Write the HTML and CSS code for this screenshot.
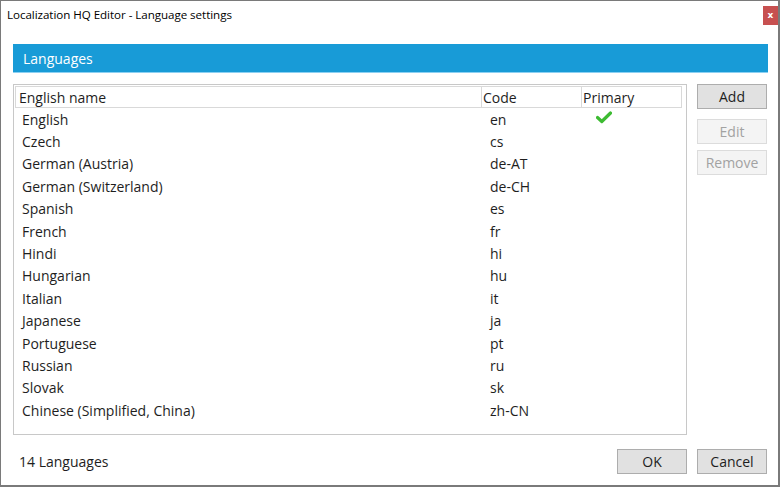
FILE: index.html
```html
<!DOCTYPE html>
<html>
<head>
<meta charset="utf-8">
<link rel="stylesheet" href="styles.css">
</head>
<body>
<div class="window">
  <div class="titlebar">
    <span class="title">Localization HQ Editor - Language settings</span>
    <span class="close">x</span>
  </div>
  <div class="content">
    <div class="section-header">Languages</div>
    <div class="main">
      <div class="listbox">
        <div class="list-head">
          <div class="col-name hcell">English name</div>
          <div class="col-code hcell">Code</div>
          <div class="col-primary hcell">Primary</div>
        </div>
        <div class="rows">
          <div class="row"><div class="col-name">English</div><div class="col-code">en</div><div class="col-primary"><svg class="check" width="16" height="13" viewBox="0 0 16 13"><path d="M1.5 6.5 L5.8 10.5 L14.5 2" fill="none" stroke="#3dbb32" stroke-width="3.2" stroke-linecap="round" stroke-linejoin="round"/></svg></div></div>
          <div class="row"><div class="col-name">Czech</div><div class="col-code">cs</div><div class="col-primary"></div></div>
          <div class="row"><div class="col-name">German (Austria)</div><div class="col-code">de-AT</div><div class="col-primary"></div></div>
          <div class="row"><div class="col-name">German (Switzerland)</div><div class="col-code">de-CH</div><div class="col-primary"></div></div>
          <div class="row"><div class="col-name">Spanish</div><div class="col-code">es</div><div class="col-primary"></div></div>
          <div class="row"><div class="col-name">French</div><div class="col-code">fr</div><div class="col-primary"></div></div>
          <div class="row"><div class="col-name">Hindi</div><div class="col-code">hi</div><div class="col-primary"></div></div>
          <div class="row"><div class="col-name">Hungarian</div><div class="col-code">hu</div><div class="col-primary"></div></div>
          <div class="row"><div class="col-name">Italian</div><div class="col-code">it</div><div class="col-primary"></div></div>
          <div class="row"><div class="col-name">Japanese</div><div class="col-code">ja</div><div class="col-primary"></div></div>
          <div class="row"><div class="col-name">Portuguese</div><div class="col-code">pt</div><div class="col-primary"></div></div>
          <div class="row"><div class="col-name">Russian</div><div class="col-code">ru</div><div class="col-primary"></div></div>
          <div class="row"><div class="col-name">Slovak</div><div class="col-code">sk</div><div class="col-primary"></div></div>
          <div class="row"><div class="col-name">Chinese (Simplified, China)</div><div class="col-code">zh-CN</div><div class="col-primary"></div></div>
        </div>
      </div>
      <div class="side-buttons">
        <div class="btn">Add</div>
        <div class="btn disabled gap-top">Edit</div>
        <div class="btn disabled">Remove</div>
      </div>
    </div>
    <div class="footer">
      <span class="count">14 Languages</span>
      <div class="footer-buttons">
        <div class="btn">OK</div>
        <div class="btn">Cancel</div>
      </div>
    </div>
  </div>
</div>
</body>
</html>
```

FILE: styles.css
```css
* { box-sizing: border-box; }
html, body { margin: 0; padding: 0; background: #fff; }
body {
  font-family: "Open Sans", "Noto Sans", sans-serif;
  color: #1e1e1e;
}
.window {
  width: 780px;
  height: 487px;
  border-left: 1px solid #7a7a7a;
  border-top: 1px solid #7a7a7a;
  border-right: 2px solid #7a7a7a;
  border-bottom: 2px solid #7a7a7a;
  background: #fff;
  display: flex;
  flex-direction: column;
}
.titlebar {
  height: 29px;
  display: flex;
  align-items: center;
  justify-content: space-between;
  padding-left: 6px;
}
.title {
  font-size: 11.6px;
  color: #000;
  letter-spacing: -0.05px;
  margin-top: -2px;
}
.close {
  width: 15px;
  height: 19px;
  background: #c75050;
  color: #fff;
  font-family: "DejaVu Sans", sans-serif;
  font-weight: bold;
  font-size: 9px;
  display: flex;
  align-items: center;
  justify-content: center;
  align-self: flex-start;
  margin-top: 5px;
  line-height: 1;
}
.content {
  padding: 14px 10px 0 12px;
  display: flex;
  flex-direction: column;
}
.section-header {
  height: 29px;
  background: #189bd7;
  border-bottom: 1px solid #8cd0f2;
  color: #fff;
  font-size: 14px;
  padding-left: 10px;
  display: flex;
  align-items: center;
}
.main {
  display: flex;
  margin-top: 11px;
  gap: 10px;
}
.listbox {
  width: 674px;
  height: 351px;
  border: 1px solid #c8c8c8;
  padding: 1px 4px 0 1px;
}
.list-head {
  display: flex;
  height: 22px;
  border: 1px solid #d9d9d9;
  font-size: 14px;
}
.hcell {
  display: flex;
  align-items: center;
  padding-left: 1px;
  border-right: 1px solid #d9d9d9;
  color: #1e1e1e;
}
.list-head .col-name { padding-left: 3px; }
.list-head .col-primary { border-right: none; }
.col-name { width: 466px; }
.col-code { width: 100px; }
.col-primary { flex: 1; }
.rows {
  padding-top: 0;
  font-size: 14px;
}
.row {
  display: flex;
  height: 22.4px;
  align-items: center;
}
.row .col-name { padding-left: 7px; }
.row .col-code { padding-left: 9px; }
.row .col-primary { padding-left: 15px; display: flex; align-items: center; }
.check { margin-top: -3px; }
.side-buttons {
  display: flex;
  flex-direction: column;
  gap: 6px;
  width: 70px;
}
.btn {
  height: 25px;
  background: #e1e1e1;
  border: 1px solid #adadad;
  font-size: 14px;
  color: #1e1e1e;
  display: flex;
  align-items: center;
  justify-content: center;
  width: 70px;
}
.btn.disabled {
  background: #f4f4f4;
  border-color: #dcdcdc;
  color: #a2a2a2;
}
.gap-top { margin-top: 4px; }
.footer {
  display: flex;
  align-items: center;
  justify-content: space-between;
  margin-top: 14px;
}
.count {
  font-size: 14px;
  padding-left: 6px;
}
.footer-buttons {
  display: flex;
  gap: 10px;
  margin-right: 1px;
}
```
